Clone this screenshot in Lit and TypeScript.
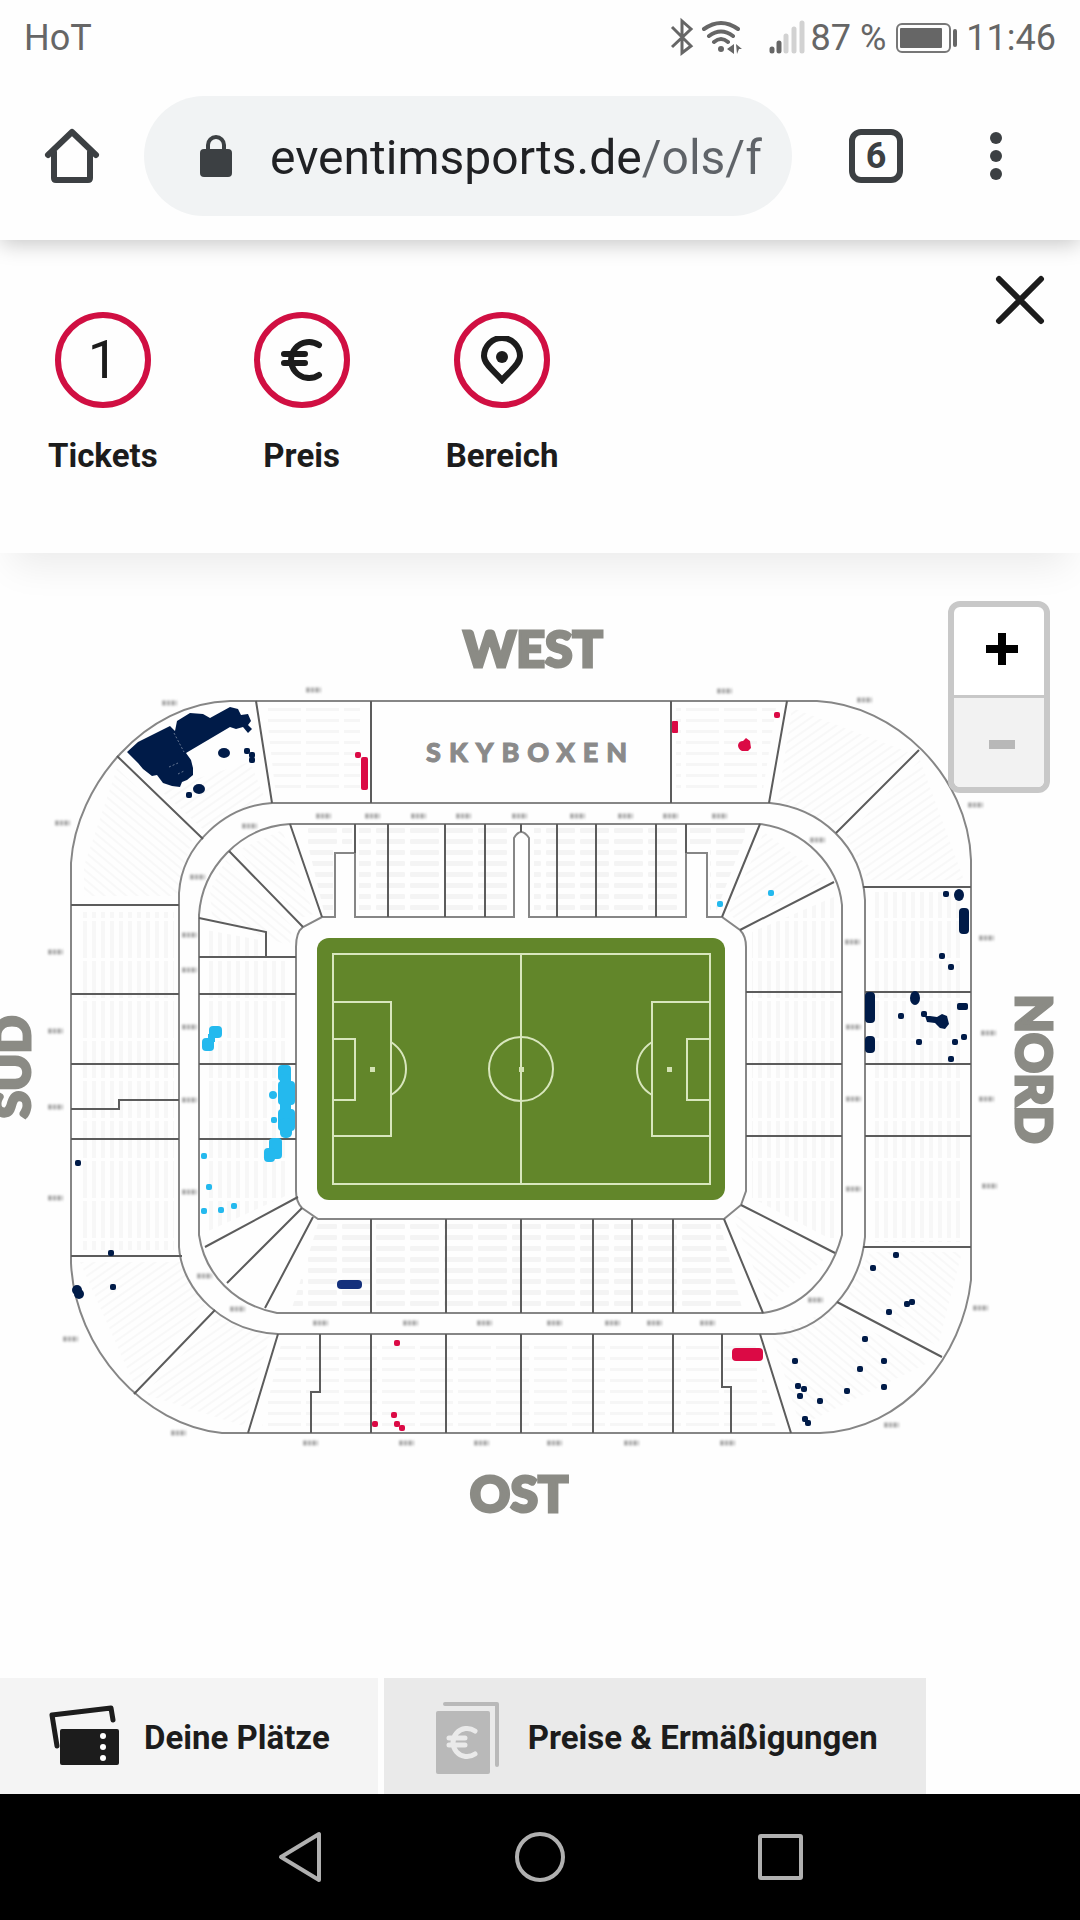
import { LitElement, html, svg, css } from "lit";
import { customElement } from "lit/decorators.js";

type Point = [number, number];

/* Section codes around the stands, by centre point. */
const SECTION_CODES: Point[] = [
  [169, 703], [313, 690], [62, 823], [323, 816], [372, 816], [418, 816], [463, 816], [519, 816],
  [577, 816], [625, 816], [670, 816], [719, 816], [249, 826], [197, 877], [189, 935], [189, 970],
  [55, 952], [724, 691], [864, 700], [975, 805], [817, 840], [986, 938], [852, 942], [55, 1031],
  [189, 1027], [55, 1107], [189, 1100], [55, 1198], [189, 1192], [204, 1276], [237, 1309], [70, 1339],
  [178, 1433], [320, 1323], [410, 1323], [484, 1323], [554, 1323], [612, 1323], [654, 1323],
  [707, 1323], [310, 1443], [406, 1443], [481, 1443], [554, 1443], [631, 1443], [727, 1443],
  [853, 1027], [853, 1099], [853, 1189], [815, 1300], [988, 1033], [986, 1099], [989, 1186],
  [980, 1308], [891, 1425],
];

const NAVY_SEATS: Point[] = [
  [247, 751], [252, 755], [252, 760], [189, 795], [946, 894], [942, 956], [951, 967],
  [901, 1016], [924, 1014], [964, 1037], [955, 1042], [919, 1042], [951, 1059],
  [896, 1255], [873, 1268], [907, 1304], [912, 1302], [889, 1312], [865, 1339], [884, 1361],
  [860, 1369], [795, 1361], [798, 1386], [804, 1389], [800, 1396], [884, 1387], [847, 1391],
  [820, 1401], [805, 1419], [808, 1423], [78, 1163], [111, 1253], [113, 1287],
];

const RED_SEATS: Point[] = [
  [358, 755], [777, 715], [397, 1343], [394, 1415], [375, 1424], [397, 1424], [402, 1428],
];

const CYAN_SEATS: Point[] = [
  [720, 904], [771, 893], [204, 1156], [209, 1187], [204, 1211], [221, 1210], [234, 1206], [274, 1120],
];

const dots = (points: Point[]) =>
  points.map(([x, y]) => svg`<rect x=${x - 3} y=${y - 3} width="6" height="6" rx="2"/>`);

@customElement("stadium-map")
export class StadiumMap extends LitElement {
  static styles = css`
    :host { display: block; }
    .plan { display: block; width: 100%; height: auto; }
    .walls { fill: none; stroke: #868686; stroke-width: 2; }
    .aisles { fill: none; stroke: #5c5c5c; stroke-width: 2; }
    .side {
      font: 900 50px Lato, "Open Sans", sans-serif;
      fill: #8b8b85;
      stroke: #8b8b85;
      stroke-width: 3;
      text-anchor: middle;
    }
    .boxes {
      font: 900 27px Lato, "Open Sans", sans-serif;
      fill: #8a8a8a;
      stroke: #8a8a8a;
      stroke-width: 1;
      letter-spacing: 8px;
    }
    .codes { stroke: #8c8c8c; stroke-width: 5; stroke-dasharray: 4 1 3 1; opacity: 0.7; filter: blur(1px); }
    .lines { fill: none; stroke: #d8e6bd; stroke-width: 2; }
    .navy { fill: #001b48; }
    .blue { fill: #14307c; }
    .red { fill: #db0a45; }
    .cyan { fill: #24b9ee; }
  `;

  render() {
    return html`
      <svg class="plan" viewBox="0 553 1080 1125" role="img" aria-label="Stadionplan">
        <defs>
          <pattern id="rows" width="34" height="11" patternUnits="userSpaceOnUse">
            <rect x="2" y="3" width="29" height="5" rx="1" fill="#f4f4f4"/>
          </pattern>
          <pattern id="rows-faint" width="38" height="11" patternUnits="userSpaceOnUse">
            <rect x="2" y="4" width="33" height="3" fill="#f6f6f6"/>
          </pattern>
          <pattern id="cols" width="9" height="40" patternUnits="userSpaceOnUse">
            <rect x="2" y="1" width="4" height="37" fill="#f7f7f7"/>
          </pattern>
          <pattern id="slant-up" width="7" height="7" patternUnits="userSpaceOnUse" patternTransform="rotate(-35)">
            <rect width="7" height="2" y="2" fill="#f8f8f8"/>
          </pattern>
          <pattern id="slant-down" width="7" height="7" patternUnits="userSpaceOnUse" patternTransform="rotate(40)">
            <rect width="7" height="2" y="2" fill="#f8f8f8"/>
          </pattern>
        </defs>

        <g fill="url(#rows)">
          <path d="M304 828H352V850H333V912H324Z M359 828H510V912H359Z M534 828H682V912H534Z M690 828H748L716 912H710V850H690Z"/>
          <path d="M318 1224H720L742 1308H292Z"/>
        </g>
        <g fill="url(#rows-faint)">
          <path d="M266 708H360V796H276Z M676 708H776L762 796H676Z M282 1340H754L776 1428H262Z"/>
        </g>
        <g fill="url(#cols)">
          <path d="M78 912H174V1250H78Z M206 930L260 940V960H290V1194L206 1232Z"/>
          <path d="M872 892H964V1242H872Z M752 932L836 896V1242L752 1198Z"/>
        </g>
        <g fill="url(#slant-down)">
          <path d="M84 866L117 768L192 840L176 896H84Z M238 850L282 830L314 914L300 918Z M210 890L226 860L292 926L290 946L212 918Z"/>
          <path d="M870 1252H962L938 1346L846 1298Z M732 1214L826 1258L768 1304Z M772 1334L832 1310L930 1362L800 1426Z"/>
        </g>
        <g fill="url(#slant-up)">
          <path d="M792 708L908 752L834 824L778 800Z M846 836L920 760L964 880H868Z M764 832L828 880L740 922L728 914Z"/>
          <path d="M80 1262H182L206 1308L134 1384Z M144 1394L218 1318L270 1336L244 1426Z M160 790L250 762L264 796L206 832Z"/>
        </g>

        <g class="walls">
          <path d="M71 863C76 785 145 703 230 701H817C895 705 968 775 971 860V1280C963 1355 905 1430 820 1433H222C145 1425 75 1350 71 1263Z"/>
          <path d="M179 893C182 845 225 806 272 803H770C820 808 862 845 865 900V1237C860 1290 820 1332 775 1334H278C225 1332 182 1292 179 1247Z"/>
          <path d="M199 915C202 868 240 827 290 824H760C805 830 838 865 842 905V1235C830 1280 800 1308 763 1313H277C235 1305 205 1275 199 1235Z"/>
          <path d="M296 947Q296 932 303 927L322 917H335V853H355V917H514V838Q521 826 529 838V917H686V853H707V917H722L740 930Q746 936 746 947V1191L741 1205L724 1219H318L302 1208Q296 1202 296 1191Z"/>
        </g>
        <g class="aisles">
          <path d="M256 701L272 803M371 701V803M671 701V803M787 701L769 803"/>
          <path d="M117 756L203 839M919 750L836 833"/>
          <path d="M863 887H971M865 992H971M865 1064H971M865 1136H971M863 1247H971"/>
          <path d="M837 1302L942 1357M760 1334L791 1433"/>
          <path d="M746 992H842M746 1064H842M746 1136H842"/>
          <path d="M740 930L834 882M722 917L760 824M741 1205L835 1253M724 1219L763 1313"/>
          <path d="M71 905H179M71 994H179M71 1064H179M71 1109H119V1100H179M71 1139H179M71 1256H182"/>
          <path d="M134 1394L215 1310M248 1433L278 1334"/>
          <path d="M199 918L266 932V957M199 957H296M199 994H296M199 1064H296M199 1139H296"/>
          <path d="M229 851L303 927M290 824L322 917M205 1247L298 1197M227 1283L302 1208M265 1308L313 1217"/>
          <path d="M355 824V853M388 824V917M445 824V917M485 824V917M521 824V832M557 824V917M596 824V917M656 824V917M686 824V853"/>
          <path d="M371 1219V1313M446 1219V1313M521 1219V1313M593 1219V1313M632 1219V1313M673 1219V1313"/>
          <path d="M320 1334V1392H311V1433M371 1334V1433M446 1334V1433M521 1334V1433M593 1334V1433M673 1334V1433M722 1334V1387H731V1433"/>
        </g>

        <g class="codes">
          ${SECTION_CODES.map(([x, y]) => svg`<path d="M${x - 7} ${y}H${x + 8}"/>`)}
        </g>

        <rect x="317" y="938" width="408" height="262" rx="12" fill="#62862a"/>
        <g class="lines">
          <path d="M333 954H710V1184H333ZM521 954V1184"/>
          <path d="M333 1002H391V1136H333M333 1039H355V1100H333M391 1042Q406 1052 406 1069T391 1095"/>
          <path d="M710 1002H652V1136H710M710 1039H687V1100H710M652 1042Q637 1052 637 1069T652 1095"/>
          <circle cx="521" cy="1069" r="32"/>
        </g>
        <g fill="#d3e2b4">
          <rect x="370" y="1067" width="5" height="5"/>
          <rect x="519" y="1067" width="5" height="5"/>
          <rect x="667" y="1067" width="5" height="5"/>
        </g>

        <g class="navy">
          <path d="M127 752L138 742L170 726L175 731L177 721L190 713L203 714L210 718L230 707L238 709L241 715L248 714L251 721L248 725L252 729L248 733L243 727L236 729L230 727L186 753L191 760L193 768L193 775L187 780L182 782L180 787L172 786L163 783L157 775L152 776L143 769L138 763Z"/>
          <ellipse cx="224" cy="753" rx="6" ry="5"/>
          <ellipse cx="199" cy="789" rx="6" ry="5"/>
          <ellipse cx="959" cy="895" rx="5" ry="6"/>
          <rect x="959" y="908" width="10" height="26" rx="4"/>
          <rect x="865" y="992" width="10" height="31" rx="4"/>
          <rect x="865" y="1036" width="10" height="17" rx="4"/>
          <ellipse cx="915" cy="998" rx="5" ry="7"/>
          <rect x="957" y="1003" width="11" height="7" rx="2"/>
          <path d="M925 1016L930 1016L937 1017L942 1014L947 1016L949 1024L945 1029L940 1028L935 1023L927 1022Z"/>
          <circle cx="77" cy="1290" r="5"/>
          <circle cx="79" cy="1294" r="5"/>
          ${dots(NAVY_SEATS)}
        </g>
        <path d="M174 733L184 752M169 767L178 763M178 774L184 771" fill="none" stroke="#ffffff" stroke-opacity="0.4" stroke-dasharray="2 2"/>
        <g class="red">
          <rect x="361" y="757" width="7" height="33" rx="2"/>
          <rect x="672" y="721" width="6" height="12" rx="1"/>
          <path d="M738 745Q739 741 743 741L746 738L750 741L751 748L748 751H742Q738 749 738 745Z"/>
          <rect x="732" y="1348" width="31" height="13" rx="4"/>
          ${dots(RED_SEATS)}
        </g>
        <g class="cyan">
          <rect x="209" y="1026" width="13" height="12" rx="4"/>
          <rect x="202" y="1038" width="12" height="13" rx="4"/>
          <rect x="208" y="1034" width="7" height="8"/>
          <rect x="278" y="1065" width="13" height="16" rx="4"/>
          <rect x="280" y="1074" width="11" height="56" rx="4"/>
          <rect x="278" y="1081" width="17" height="24" rx="4"/>
          <rect x="278" y="1109" width="17" height="22" rx="4"/>
          <rect x="280" y="1118" width="12" height="20" rx="5"/>
          <circle cx="273" cy="1095" r="4"/>
          <rect x="269" y="1138" width="13" height="21" rx="4"/>
          <rect x="264" y="1148" width="11" height="14" rx="4"/>
          ${dots(CYAN_SEATS)}
        </g>
        <rect class="blue" x="337" y="1280" width="25" height="9" rx="4"/>

        <text class="side" x="533" y="667">WEST</text>
        <text class="side" x="519" y="1512">OST</text>
        <text class="side" transform="translate(1016 1069) rotate(90)">NORD</text>
        <text class="side" transform="translate(30 1067) rotate(-90)">SÜD</text>
        <text class="boxes" x="426" y="762">SKYBOXEN</text>
      </svg>
    `;
  }
}

@customElement("app-root")
export class AppRoot extends LitElement {
  static styles = css`
    :host {
      display: flex;
      flex-direction: column;
      min-height: 100vh;
      background: #fefefe;
      color: #1c1c1c;
      font-family: Roboto, "Noto Sans", sans-serif;
    }
    * { box-sizing: border-box; }
    button {
      display: flex;
      align-items: center;
      justify-content: center;
      margin: 0;
      padding: 0;
      border: 0;
      background: none;
      color: inherit;
      font: inherit;
    }
    svg { display: block; flex: none; }

    .status {
      display: flex;
      align-items: center;
      justify-content: space-between;
      height: 76px;
      padding: 0 24px;
      color: #666666;
      font-size: 36px;
      line-height: 42px;
    }
    .status-right { display: flex; align-items: center; }
    .battery { margin: 0 8px 0 10px; }

    .toolbar {
      position: relative;
      display: flex;
      align-items: center;
      padding: 20px 54px 24px 42px;
      background: #fefefe;
      box-shadow: 0 4px 20px rgba(0, 0, 0, 0.22);
      clip-path: inset(0 0 -30px 0);
      color: #3c4043;
    }
    .tool { width: 60px; height: 60px; }
    .address {
      display: flex;
      flex: 1;
      align-items: center;
      gap: 38px;
      min-width: 0;
      height: 120px;
      margin: 0 54px 0 42px;
      padding: 0 28px 0 56px;
      border-radius: 60px;
      background: #f1f3f4;
    }
    .url {
      flex: 1;
      min-width: 0;
      height: 60px;
      padding: 2px 0 0;
      border: 0;
      outline: 0;
      background: linear-gradient(90deg, #202124 371px, #5f6368 371px);
      background-clip: text;
      -webkit-background-clip: text;
      color: transparent;
      font: 48px Roboto, "Noto Sans", sans-serif;
    }
    .count {
      width: 54px;
      height: 54px;
      border: 6px solid #3c4043;
      border-radius: 12px;
      font-size: 36px;
      font-weight: 700;
      line-height: 42px;
      text-align: center;
    }
    .menu { margin-left: 60px; }

    .filters {
      display: flex;
      align-items: flex-start;
      justify-content: space-between;
      padding: 30px 30px 76px 48px;
      box-shadow: 0 24px 36px -12px rgba(0, 0, 0, 0.08);
    }
    .filter-list { display: flex; gap: 96px; padding-top: 42px; }
    .filter { flex-direction: column; gap: 27px; }
    .ring {
      display: flex;
      align-items: center;
      justify-content: center;
      width: 96px;
      height: 96px;
      border: 6px solid #d00f42;
      border-radius: 50%;
      font-size: 54px;
      line-height: 60px;
    }
    .label { font-size: 33px; font-weight: 700; line-height: 42px; white-space: nowrap; }
    .close { width: 60px; height: 60px; }

    .map { position: relative; flex: 1; }
    .zoom {
      position: absolute;
      top: 48px;
      right: 30px;
      width: 102px;
      border: 6px solid #c8c8c8;
      border-radius: 12px;
      background: #ffffff;
      overflow: hidden;
    }
    .zoom-step { width: 100%; height: 88px; padding-bottom: 4px; }
    .zoom-step:disabled {
      height: 92px;
      padding: 0;
      border-top: 3px solid #c8c8c8;
      background: #f2f2f2;
    }

    .tabs { display: flex; gap: 6px; }
    .tab { gap: 24px; height: 116px; padding: 4px 48px 0; background: #f4f4f4; }
    .tab-alt { background: #eaeaea; }

    .nav {
      display: flex;
      align-items: center;
      justify-content: center;
      gap: 168px;
      height: 126px;
      background: #000000;
    }
    .nav-key { width: 72px; height: 72px; }
  `;

  render() {
    return html`
      <div class="status">
        <span>HoT</span>
        <div class="status-right">
          <svg width="144" height="42" viewBox="668 16 144 42" aria-hidden="true">
            <path d="M673 26L692 45L683 52V20L692 28L673 46" fill="none" stroke="#666" stroke-width="3"/>
            <g fill="none" stroke="#666" stroke-width="4" stroke-linecap="round">
              <path d="M705 28Q722 16 739 28M710 35Q722 26 734 35M715 41Q722 35 729 41"/>
            </g>
            <circle cx="722" cy="48" r="3" fill="#666"/>
            <path d="M728 48L735 43V53ZM737 43L743 48L740 48L738 53Z" fill="#666"/>
            <g stroke-width="5" stroke-linecap="round">
              <path d="M773 48V50M780 42V50" stroke="#666"/>
              <path d="M787 35V50M795 28V50M803 22V50" stroke="#d2d2d2"/>
            </g>
          </svg>
          <span>87 %</span>
          <svg class="battery" width="62" height="30" viewBox="0 0 62 30" aria-hidden="true">
            <rect x="1" y="1" width="53" height="28" rx="5" fill="none" stroke="#777" stroke-width="2"/>
            <rect x="4" y="5" width="42" height="20" rx="1" fill="#666"/>
            <rect x="57" y="6" width="4" height="18" rx="2" fill="#666"/>
          </svg>
          <span>11:46</span>
        </div>
      </div>

      <div class="toolbar">
        <button class="tool" aria-label="Startseite">
          <svg width="60" height="60" viewBox="0 0 60 60" fill="none" stroke="#3c4043" stroke-width="6" stroke-linejoin="round" stroke-linecap="round">
            <path d="M6 29L30 6L54 29M12 26V52Q12 54 14 54H46Q48 54 48 52V26"/>
          </svg>
        </button>
        <div class="address">
          <svg width="32" height="42" viewBox="0 0 32 42" aria-hidden="true">
            <rect y="14" width="32" height="28" rx="4" fill="#3c4043"/>
            <path d="M8 16V10A8 8 0 0 1 24 10V16" fill="none" stroke="#3c4043" stroke-width="4"/>
          </svg>
          <input class="url" type="text" aria-label="Adresse" .value=${"eventimsports.de/ols/f"} />
        </div>
        <button class="tool" aria-label="6 offene Tabs"><span class="count">6</span></button>
        <button class="tool menu" aria-label="Menü">
          <svg width="12" height="48" viewBox="0 0 12 48" fill="#3c4043">
            <circle cx="6" cy="6" r="6"/><circle cx="6" cy="24" r="6"/><circle cx="6" cy="42" r="6"/>
          </svg>
        </button>
      </div>

      <header class="filters">
        <div class="filter-list">
          <button class="filter">
            <span class="ring">1</span>
            <span class="label">Tickets</span>
          </button>
          <button class="filter">
            <span class="ring">
              <svg width="48" height="48" viewBox="0 0 48 48" fill="none" stroke="#1c1c1c" stroke-width="6" stroke-linecap="round">
                <path d="M41 9A18 18 0 1 0 41 39M6 18H27M6 27H27"/>
              </svg>
            </span>
            <span class="label">Preis</span>
          </button>
          <button class="filter">
            <span class="ring">
              <svg width="48" height="48" viewBox="0 0 48 48">
                <path d="M24 44C16 35 6 28 6 20A18 18 0 0 1 42 20C42 28 32 35 24 44Z" fill="none" stroke="#1c1c1c" stroke-width="6"/>
                <circle cx="24" cy="21" r="6" fill="#1c1c1c"/>
              </svg>
            </span>
            <span class="label">Bereich</span>
          </button>
        </div>
        <button class="close" aria-label="Schließen">
          <svg width="60" height="60" viewBox="0 0 60 60" stroke="#1c1c1c" stroke-width="6" stroke-linecap="round">
            <path d="M9 9L51 51M51 9L9 51"/>
          </svg>
        </button>
      </header>

      <main class="map">
        <stadium-map></stadium-map>
        <div class="zoom">
          <button class="zoom-step" aria-label="Vergrößern">
            <svg width="48" height="34" viewBox="0 0 48 34" fill="#000">
              <path d="M11 13H23V1H31V13H43V21H31V33H23V21H11Z"/>
            </svg>
          </button>
          <button class="zoom-step" aria-label="Verkleinern" disabled>
            <svg width="48" height="34" viewBox="0 0 48 34" fill="#b8b8b8">
              <rect x="14" y="14" width="26" height="9"/>
            </svg>
          </button>
        </div>
      </main>

      <div class="tabs">
        <button class="tab">
          <svg width="72" height="72" viewBox="0 0 72 72">
            <path d="M8 44L3 13L62 6L64 18" transform="translate(1 0)" fill="none" stroke="#1c1c1c" stroke-width="5" stroke-linejoin="round" stroke-linecap="round"/>
            <rect x="12" y="27" width="59" height="36" rx="2" fill="#1c1c1c"/>
            <g fill="#ffffff"><circle cx="55" cy="34" r="3"/><circle cx="55" cy="45" r="3"/><circle cx="55" cy="56" r="3"/></g>
          </svg>
          <span class="label">Deine Plätze</span>
        </button>
        <button class="tab tab-alt">
          <svg width="72" height="72" viewBox="0 0 72 72">
            <path d="M13 2H65V63" fill="none" stroke="#b9b9b9" stroke-width="4" stroke-linejoin="round" stroke-linecap="round"/>
            <rect x="4" y="9" width="54" height="63" rx="2" fill="#b9b9b9"/>
            <path d="M43 29A14 14 0 1 0 43 52M17 36H33M17 43H33" fill="none" stroke="#eaeaea" stroke-width="5" stroke-linecap="round"/>
          </svg>
          <span class="label">Preise &amp; Ermäßigungen</span>
        </button>
      </div>

      <nav class="nav" aria-label="Systemnavigation">
        <button class="nav-key" aria-label="Zurück">
          <svg width="72" height="72" viewBox="0 0 72 72" fill="none" stroke="#b0b0b0" stroke-width="4" stroke-linejoin="round">
            <path d="M55 13V59L17 36Z"/>
          </svg>
        </button>
        <button class="nav-key" aria-label="Startbildschirm">
          <svg width="72" height="72" viewBox="0 0 72 72" fill="none" stroke="#b0b0b0" stroke-width="4">
            <circle cx="36" cy="36" r="23"/>
          </svg>
        </button>
        <button class="nav-key" aria-label="Letzte Apps">
          <svg width="72" height="72" viewBox="0 0 72 72" fill="none" stroke="#b0b0b0" stroke-width="4" stroke-linejoin="round">
            <rect x="16" y="15" width="41" height="42" rx="1"/>
          </svg>
        </button>
      </nav>
    `;
  }
}
